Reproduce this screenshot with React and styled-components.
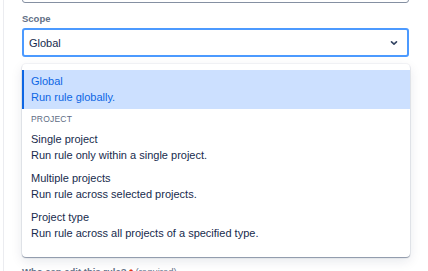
import React from "react";
import styled, { createGlobalStyle } from "styled-components";

const Global = createGlobalStyle`
  html, body { margin: 0; padding: 0; background: #ffffff; }
  body {
    font-family: "Liberation Sans", Arial, sans-serif;
    color: #172b4d;
    -webkit-font-smoothing: antialiased;
  }
`;

const Page = styled.div`
  width: 428px;
  height: 271px;
  overflow: hidden;
  box-sizing: border-box;
  padding-left: 3px;
`;

const Panel = styled.div`
  height: 100%;
  border-left: 1px solid #ebecf0;
  box-sizing: border-box;
  padding: 0 18px 0 18px;
  display: flex;
  flex-direction: column;
`;

const TopInput = styled.div`
  margin-top: -20px;
  height: 23px;
  border: 1px solid #8590a2;
  border-radius: 3px;
  width: 387px;
  box-sizing: border-box;
  flex: none;
`;

const Label = styled.div`
  margin-top: 10px;
  font-size: 9.5px;
  line-height: 12px;
  font-weight: 700;
  color: #626f86;
  flex: none;
`;

const Select = styled.div`
  margin-top: 3px;
  width: 387px;
  height: 29px;
  box-sizing: border-box;
  border: 2px solid #4c9aff;
  border-radius: 3px;
  display: flex;
  align-items: center;
  justify-content: space-between;
  padding: 0 9px 0 5px;
  font-size: 11px;
  color: #172b4d;
  flex: none;
`;

const Chevron = styled.svg`
  width: 8px;
  height: 8px;
  display: block;
`;

const Menu = styled.div`
  margin-top: 7px;
  width: 388px;
  box-sizing: border-box;
  background: #ffffff;
  border-radius: 4px;
  padding: 6px 0 12px;
  box-shadow: 0 0 0 1px rgba(9, 30, 66, 0.04), 0 1px 1px rgba(9, 30, 66, 0.4),
    0 4px 12px rgba(9, 30, 66, 0.1);
  flex: none;
`;

const Option = styled.div`
  padding: 4px 9px 4px ${(p) => (p.$selected ? "7px" : "9px")};
  border-left: ${(p) => (p.$selected ? "2px solid #0c66e4" : "none")};
  background: ${(p) => (p.$selected ? "#cce0ff" : "transparent")};
  color: ${(p) => (p.$selected ? "#0c66e4" : "#172b4d")};
  font-size: 11px;
  line-height: 15.5px;
`;

const Heading = styled.div`
  padding: 5px 9px 3px;
  font-size: 8.5px;
  line-height: 11px;
  letter-spacing: 0.2px;
  text-transform: uppercase;
  color: #5e6c84;
`;

const Bottom = styled.div`
  margin-top: 9px;
  font-size: 9.5px;
  line-height: 12px;
  font-weight: 700;
  color: #626f86;
  flex: none;
`;

const Req = styled.span`
  color: #de350b;
`;

const Normal = styled.span`
  font-weight: 400;
`;

const options = [
  { title: "Single project", desc: "Run rule only within a single project." },
  { title: "Multiple projects", desc: "Run rule across selected projects." },
  { title: "Project type", desc: "Run rule across all projects of a specified type." },
];

export default function App() {
  return (
    <Page>
      <Global />
      <Panel>
        <TopInput />
        <Label>Scope</Label>
        <Select>
          <span>Global</span>
          <Chevron viewBox="0 0 8 8">
            <path d="M1.5 2.8 L4 5.2 L6.5 2.8" fill="none" stroke="#344563" strokeWidth="1.6" strokeLinecap="round" strokeLinejoin="round" />
          </Chevron>
        </Select>
        <Menu>
          <Option $selected>
            <div>Global</div>
            <div>Run rule globally.</div>
          </Option>
          <Heading>Project</Heading>
          {options.map((o) => (
            <Option key={o.title}>
              <div>{o.title}</div>
              <div>{o.desc}</div>
            </Option>
          ))}
        </Menu>
        <Bottom>
          Who can edit this rule? <Req>*</Req> <Normal>(required)</Normal>
        </Bottom>
      </Panel>
    </Page>
  );
}
